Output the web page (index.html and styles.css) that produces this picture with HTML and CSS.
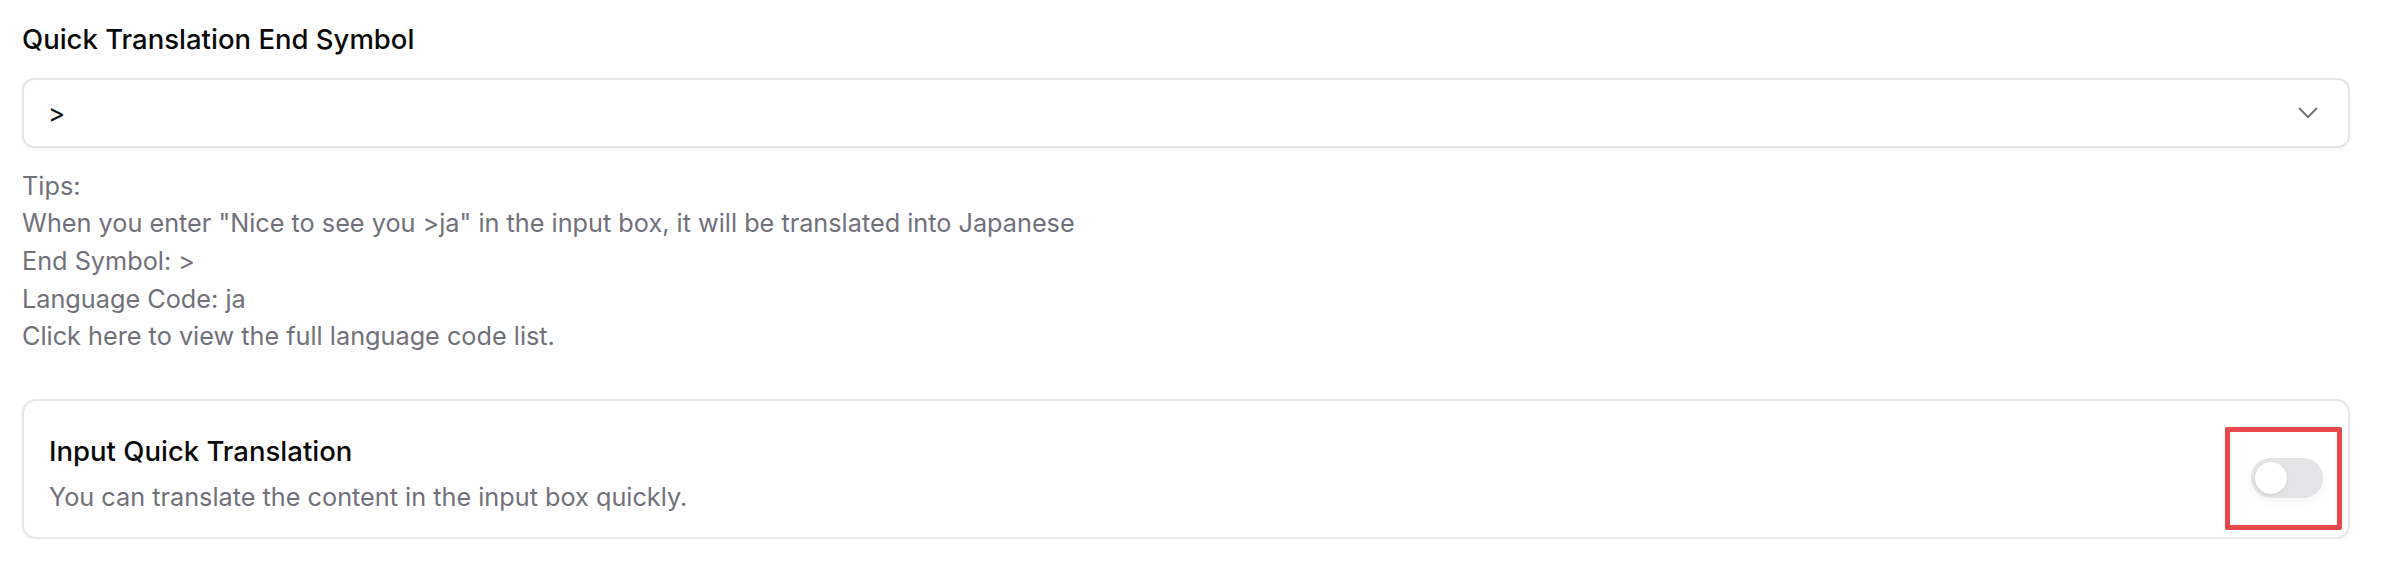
FILE: index.html
```html
<!DOCTYPE html>
<html lang="en">
<head>
<meta charset="utf-8">
<title>Quick Translation Settings</title>
<link rel="stylesheet" href="styles.css">
</head>
<body>
<main class="page">
  <h2 class="field-label">Quick Translation End Symbol</h2>
  <div class="select">
    <span class="select-value">&gt;</span>
    <svg class="chevron" width="20" height="12" viewBox="0 0 20 12" aria-hidden="true">
      <polyline points="1.5,1.5 10,10 18.5,1.5" fill="none" stroke="#71717a" stroke-width="1.8" stroke-linecap="round" stroke-linejoin="round"/>
    </svg>
  </div>
  <div class="tips">
    <p>Tips:</p>
    <p>When you enter "Nice to see you &gt;ja" in the input box, it will be translated into Japanese</p>
    <p>End Symbol: &gt;</p>
    <p>Language Code: ja</p>
    <p>Click here to view the full language code list.</p>
  </div>
  <section class="card">
    <div class="card-text">
      <h3 class="card-title">Input Quick Translation</h3>
      <p class="card-desc">You can translate the content in the input box quickly.</p>
    </div>
    <div class="toggle-wrap">
      <div class="toggle"><span class="knob"></span></div>
      <span class="highlight"></span>
    </div>
  </section>
</main>
</body>
</html>
```

FILE: styles.css
```css
html, body {
  margin: 0;
  background: #ffffff;
}

body {
  font-family: Inter, "Noto Sans", "Liberation Sans", sans-serif;
  color: #111111;
}

.page {
  padding: 21px 36px 0 22px;
}

.field-label {
  margin: 0;
  font-size: 27.5px;
  line-height: 36px;
  font-weight: 500;
  color: #0a0a0a;
}

.select {
  margin-top: 21px;
  height: 70px;
  box-sizing: border-box;
  border: 2px solid #e5e5e5;
  border-radius: 12px;
  box-shadow: 0 2px 5px rgba(0, 0, 0, 0.04);
  display: flex;
  align-items: center;
  justify-content: space-between;
  padding: 0 30px 0 24px;
}

.select-value {
  font-size: 26px;
  color: #111;
}

.chevron {
  display: block;
}

.tips {
  margin-top: 19.5px;
  font-size: 25.25px;
  line-height: 37.7px;
  color: #71717a;
}

.tips p {
  margin: 0;
}

.card {
  margin-top: 42.5px;
  height: 140px;
  box-sizing: border-box;
  border: 2px solid #e7e7e7;
  border-radius: 14px;
  box-shadow: 0 2px 5px rgba(0, 0, 0, 0.04);
  display: flex;
  align-items: center;
  justify-content: space-between;
  padding: 0 25px 0 25px;
}

.card-text {
  margin-top: 8px;
}

.card-title {
  margin: 0;
  font-size: 27.5px;
  line-height: 36px;
  font-weight: 500;
  color: #0a0a0a;
}

.card-desc {
  margin: 12px 0 0;
  font-size: 25.25px;
  line-height: 32px;
  color: #71717a;
}

.toggle-wrap {
  position: relative;
  margin-top: 19px;
}

.toggle {
  width: 72px;
  height: 40px;
  box-sizing: border-box;
  border-radius: 20px;
  background: #e4e4e7;
  padding: 4px;
  box-shadow: 0 4px 10px rgba(0, 0, 0, 0.04);
}

.knob {
  display: block;
  width: 32px;
  height: 32px;
  border-radius: 50%;
  background: #ffffff;
  box-shadow: 0 1px 3px rgba(0, 0, 0, 0.12);
}

.highlight {
  position: absolute;
  top: -31px;
  bottom: -32px;
  left: -26px;
  right: -19px;
  border: 5px solid #e5484d;
  border-radius: 2px;
  pointer-events: none;
}
```
